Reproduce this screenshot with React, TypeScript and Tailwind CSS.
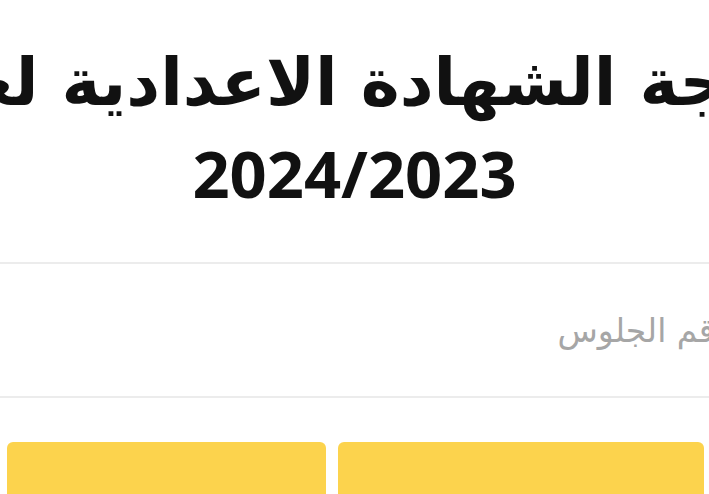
export default function App() {
  return (
    <div
      dir="rtl"
      className="flex h-[494px] w-[709px] flex-col items-center overflow-hidden bg-white"
      style={{ fontFamily: '"Open Sans", "DejaVu Sans", sans-serif' }}
    >
      <h1 className="mt-[38px] flex flex-col items-center text-center text-[#111111]">
        <span
          className="whitespace-nowrap text-[66px] font-bold leading-[90px]"
          style={{ fontFamily: '"DejaVu Sans", sans-serif' }}
        >
          نتيجة الشهادة الاعدادية لعام
        </span>
        <span className="whitespace-nowrap text-[65px] font-bold leading-[90px]">2024/2023</span>
      </h1>

      <div className="mt-[44px] w-[800px] shrink-0">
        <input
          type="text"
          placeholder="رقم الجلوس"
          className="h-[136px] w-full border-2 border-[#ececec] bg-white px-[22px] text-[33px] font-normal text-[#333333] placeholder:text-[#a6a6a6] focus:outline-none"
          style={{ fontFamily: '"DejaVu Sans", sans-serif' }}
        />
      </div>

      <div dir="ltr" className="mt-[44px] flex w-full gap-3 pl-[7px]">
        <button className="h-[80px] w-[319px] shrink-0 rounded-md bg-[#fcd34d]" />
        <button className="h-[80px] w-[366px] shrink-0 rounded-md bg-[#fcd34d]" />
      </div>
    </div>
  );
}
